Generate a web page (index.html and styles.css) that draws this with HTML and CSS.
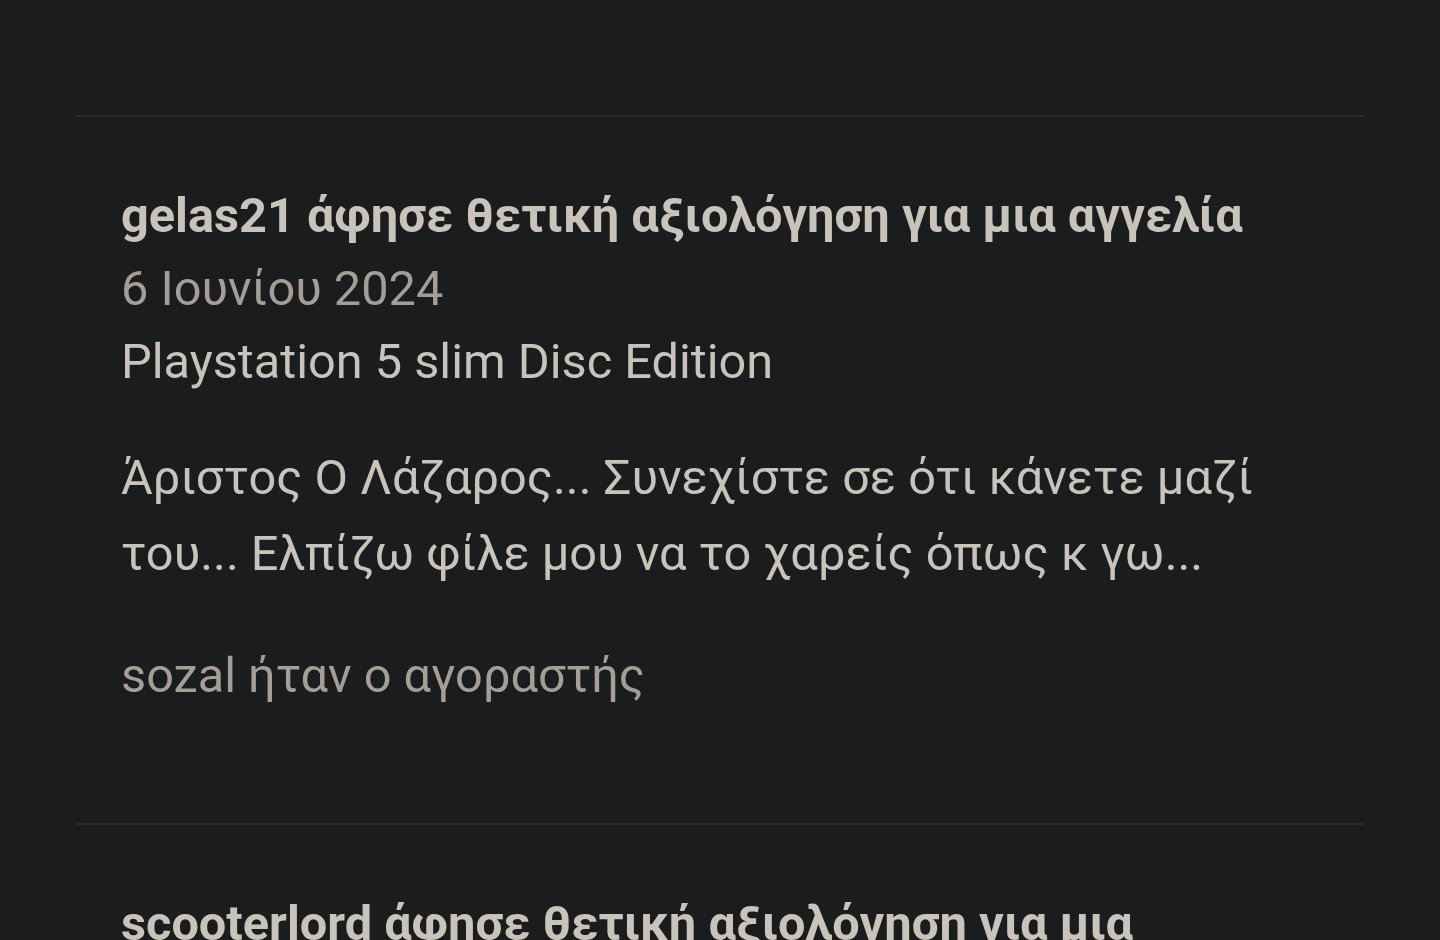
FILE: index.html
```html
<!DOCTYPE html>
<html lang="el">
<head>
  <meta charset="UTF-8"/>
  <meta name="viewport" content="width=device-width, initial-scale=1.0"/>
  <title>Αξιολογήσεις</title>
  <link rel="stylesheet" href="styles.css">
</head>
<body>

  <div class="reviews">
    <div class="review review-prev"></div>

    <div class="review">
      <h2 class="review-title">gelas21 άφησε θετική αξιολόγηση για μια αγγελία</h2>
      <div class="review-date">6 Ιουνίου 2024</div>
      <div class="review-item">Playstation 5 slim Disc Edition</div>
      <p class="review-text">Άριστος Ο Λάζαρος... Συνεχίστε σε ότι κάνετε μαζί του... Ελπίζω φίλε μου να το χαρείς όπως κ γω...</p>
      <div class="review-buyer">sozal ήταν ο αγοραστής</div>
    </div>

    <div class="review">
      <h2 class="review-title">scooterlord άφησε θετική αξιολόγηση για μια αγγελία</h2>
      <div class="review-date">2 Ιουνίου 2024</div>
    </div>
  </div>

</body>
</html>
```

FILE: styles.css
```css
* { box-sizing: border-box; margin: 0; padding: 0; }
html, body { height: 100%; overflow: hidden; }

body {
  background: #1b1c1e;
  font-family: Roboto, 'Noto Sans', sans-serif;
  color: #c8c3bb;
}

.reviews {
  margin: 0 75px;
}

.review {
  border-bottom: 2px solid #27292c;
  padding: 62px 46px 109px;
}

.review-prev {
  height: 117px;
  padding: 0;
}

.review-title {
  font-size: 48.7px;
  font-weight: 700;
  line-height: 73px;
  color: #c8c3bb;
}

.review-date {
  font-size: 48.7px;
  line-height: 73px;
  color: #a49e96;
}

.review-item {
  font-size: 48.7px;
  line-height: 73px;
}

.review-text {
  font-size: 48.7px;
  line-height: 76px;
  margin-top: 42px;
}

.review-buyer {
  font-size: 48.7px;
  line-height: 76px;
  margin-top: 46px;
  color: #a49e96;
}
```
